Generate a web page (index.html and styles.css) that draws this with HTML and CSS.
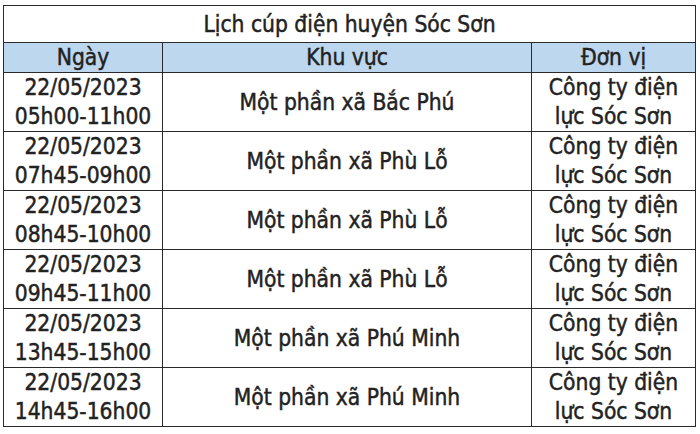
FILE: index.html
```html
<!DOCTYPE html>
<html lang="vi">
<head>
<meta charset="utf-8">
<link rel="stylesheet" href="styles.css">
</head>
<body>
<div class="frame">
<table class="schedule">
  <colgroup>
    <col class="c-date">
    <col class="c-area">
    <col class="c-unit">
  </colgroup>
  <thead>
    <tr class="title-row"><th colspan="3">Lịch cúp điện huyện Sóc Sơn</th></tr>
    <tr class="head-row"><th>Ngày</th><th>Khu vực</th><th>Đơn vị</th></tr>
  </thead>
  <tbody>
    <tr><td>22/05/2023<br>05h00-11h00</td><td>Một phần xã Bắc Phú</td><td>Công ty điện<br>lực Sóc Sơn</td></tr>
    <tr><td>22/05/2023<br>07h45-09h00</td><td>Một phần xã Phù Lỗ</td><td>Công ty điện<br>lực Sóc Sơn</td></tr>
    <tr><td>22/05/2023<br>08h45-10h00</td><td>Một phần xã Phù Lỗ</td><td>Công ty điện<br>lực Sóc Sơn</td></tr>
    <tr><td>22/05/2023<br>09h45-11h00</td><td>Một phần xã Phù Lỗ</td><td>Công ty điện<br>lực Sóc Sơn</td></tr>
    <tr><td>22/05/2023<br>13h45-15h00</td><td>Một phần xã Phú Minh</td><td>Công ty điện<br>lực Sóc Sơn</td></tr>
    <tr><td>22/05/2023<br>14h45-16h00</td><td>Một phần xã Phú Minh</td><td>Công ty điện<br>lực Sóc Sơn</td></tr>
  </tbody>
</table>
</div>
</body>
</html>
```

FILE: styles.css
```css
html, body {
  margin: 0;
  padding: 0;
  background: #ffffff;
}
.frame {
  padding: 5px 3px 0 3px;
}
.schedule {
  width: 692px;
  border-collapse: collapse;
  table-layout: fixed;
  font-family: "DejaVu Sans Condensed", "DejaVu Sans", sans-serif;
  font-size: 22.6px;
  color: #222222;
  -webkit-text-stroke: 0.45px #222222;
}
.c-date { width: 159px; }
.c-area { width: 369px; }
.c-unit { width: 164px; }
.schedule th,
.schedule td {
  border: 1px solid #2a2a2a;
  text-align: center;
  vertical-align: middle;
  padding: 0;
  font-weight: normal;
  line-height: 29px;
}
.title-row th {
  height: 36px;
  background: #ffffff;
}
.head-row th {
  height: 29px;
  background: #bdd7ee;
}
.schedule tbody td {
  height: 58px;
}
```
